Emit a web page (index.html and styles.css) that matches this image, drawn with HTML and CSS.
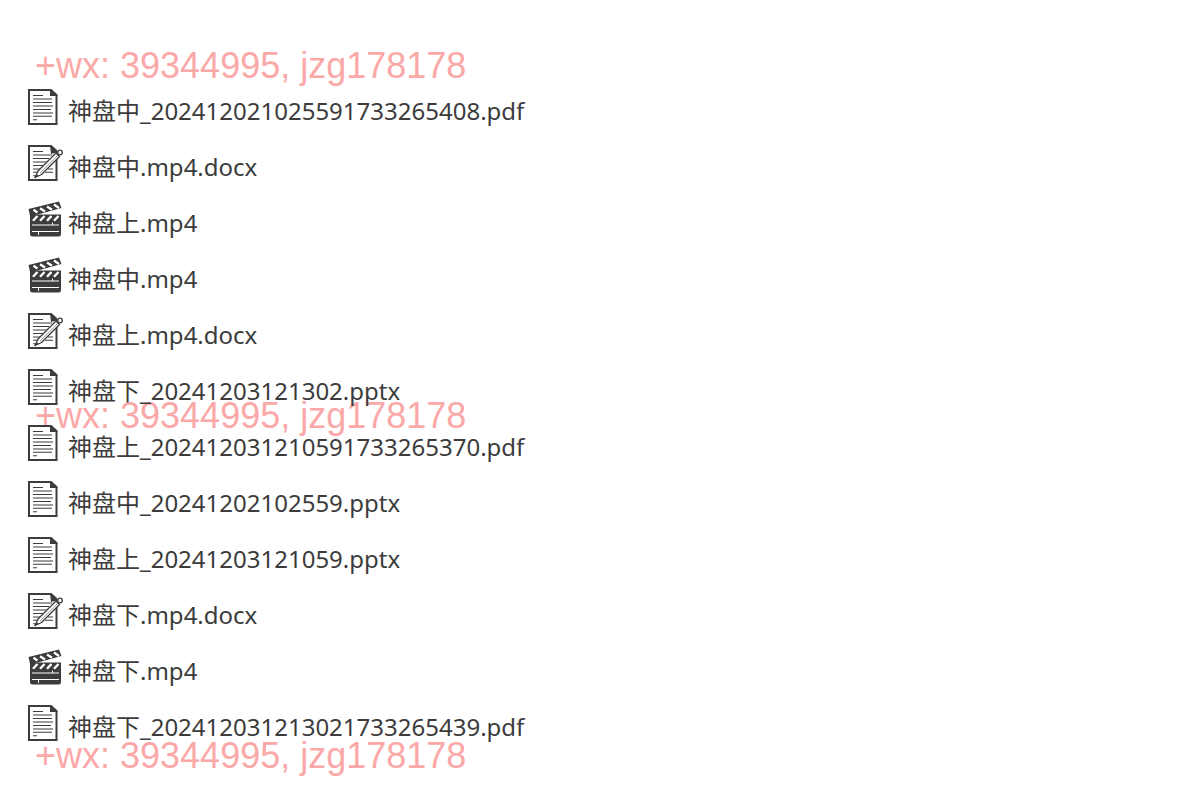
FILE: index.html
```html
<!DOCTYPE html>
<html lang="zh-CN">
<head>
  <meta charset="utf-8">
  <title>神盘</title>
  <link rel="stylesheet" href="styles.css">
</head>
<body>
  <!-- Icon shapes -->
  <svg class="sprite" aria-hidden="true">
    <symbol id="icon-page" viewBox="0 0 36 36">
      <path d="M1 1H23L28.500 6V35H1Z" fill="#fff" stroke="currentColor" stroke-width="2"/>
      <path d="M22 0L30 7H22Z" fill="currentColor"/>
      <path d="M5 6.500H15M5 10H24M5 13.500H24M5 17H25M5 20.500H23M5 24H25M5 27.300H24M5 30.700H9" stroke="currentColor" stroke-width="1.100"/>
    </symbol>
    <symbol id="icon-memo" viewBox="0 0 36 36">
      <path d="M1 1H23L28.500 6V35H1Z" fill="#fff" stroke="currentColor" stroke-width="2"/>
      <path d="M22 0L30 7L23 9Z" fill="currentColor"/>
      <path d="M5 6.500H15M5 10H24M5 13.500H21M5 17H19M5 20.500H16M5 24H13M5 27.300H10M20 24H25M17 27.300H25M5 30.700H7" stroke="currentColor" stroke-width="1.100"/>
      <path d="M7 32.500L10 26L28 8L31.500 11.500L13.500 29.500Z" fill="#fff" stroke="currentColor" stroke-width="1.300" stroke-linejoin="round"/>
      <path d="M12 28L29.500 10.500" stroke="currentColor" stroke-width="0.500"/>
      <circle cx="32" cy="7.500" r="2.300" fill="#fff" stroke="currentColor" stroke-width="1.300"/>
      <path d="M6.500 33L8.500 29L11 31Z" fill="currentColor"/>
    </symbol>
    <symbol id="icon-clapper" viewBox="0 0 36 36">
      <path d="M0.500 8L31 0.500L33.500 7L6 14.500H2Z" fill="currentColor"/>
      <path d="M2 13.500H33V33Q33 35.500 30.500 35.500H4.500Q2 35.500 2 33Z" fill="currentColor"/>
      <path d="M5.500 8.800L9.500 11.500M12 7.200L17 10.500M19 5.400L24 8.700M26 3.600L31 6.900" stroke="#fff" stroke-width="2.400"/>
      <path d="M9.500 15L5 19.800M16.500 15L12 19.800M23.500 15L19 19.800M30.500 15L26 19.800" stroke="#fff" stroke-width="2.400"/>
      <path d="M4 24H31M4 30.500H31M24.500 21.500V24M10.500 30.500V34" stroke="#fff" stroke-width="1"/>
    </symbol>
  </svg>

  <main class="files">
    <ul class="file-list">
      <li class="file"><svg class="icon"><use href="#icon-page"/></svg><span class="name">神盘中_202412021025591733265408.pdf</span></li>
      <li class="file"><svg class="icon"><use href="#icon-memo"/></svg><span class="name">神盘中.mp4.docx</span></li>
      <li class="file"><svg class="icon"><use href="#icon-clapper"/></svg><span class="name">神盘上.mp4</span></li>
      <li class="file"><svg class="icon"><use href="#icon-clapper"/></svg><span class="name">神盘中.mp4</span></li>
      <li class="file"><svg class="icon"><use href="#icon-memo"/></svg><span class="name">神盘上.mp4.docx</span></li>
      <li class="file"><svg class="icon"><use href="#icon-page"/></svg><span class="name">神盘下_20241203121302.pptx</span></li>
      <li class="file"><svg class="icon"><use href="#icon-page"/></svg><span class="name">神盘上_202412031210591733265370.pdf</span></li>
      <li class="file"><svg class="icon"><use href="#icon-page"/></svg><span class="name">神盘中_20241202102559.pptx</span></li>
      <li class="file"><svg class="icon"><use href="#icon-page"/></svg><span class="name">神盘上_20241203121059.pptx</span></li>
      <li class="file"><svg class="icon"><use href="#icon-memo"/></svg><span class="name">神盘下.mp4.docx</span></li>
      <li class="file"><svg class="icon"><use href="#icon-clapper"/></svg><span class="name">神盘下.mp4</span></li>
      <li class="file"><svg class="icon"><use href="#icon-page"/></svg><span class="name">神盘下_202412031213021733265439.pdf</span></li>
    </ul>

    <!-- Contact watermark, behind the list -->
    <div class="watermark watermark-top">+wx: 39344995, jzg178178</div>
    <div class="watermark watermark-middle">+wx: 39344995, jzg178178</div>
    <div class="watermark watermark-bottom">+wx: 39344995, jzg178178</div>
  </main>
</body>
</html>
```

FILE: styles.css
```css
body {
  margin: 0;
  background-color: #fff;
  color: #3c3c3c;
  font-family: "Noto Sans", "Noto Sans CJK SC", sans-serif;
  font-size: 24px;
}

.sprite {
  position: absolute;
  width: 0;
  height: 0;
}

.files {
  position: relative;
  z-index: 0;
  padding: 80px 28px 38px;
}

.file-list {
  list-style: none;
  margin: 0;
  padding: 0;
}

.file {
  display: flex;
  align-items: center;
  gap: 4px;
  height: 56px;
}

.icon {
  flex: none;
  width: 36px;
  height: 36px;
  margin-bottom: 2px;
}

.name {
  line-height: 32px;
  padding-top: 6px;
  white-space: nowrap;
}

.watermark {
  position: absolute;
  z-index: -1;
  left: 35px;
  color: #fba8a8;
  font-family: "Liberation Sans", Arial, sans-serif;
  font-size: 36px;
  line-height: 40px;
  white-space: nowrap;
  pointer-events: none;
}

.watermark-top {
  top: 46px;
}

.watermark-middle {
  top: 396px;
}

.watermark-bottom {
  top: 736px;
}
```
